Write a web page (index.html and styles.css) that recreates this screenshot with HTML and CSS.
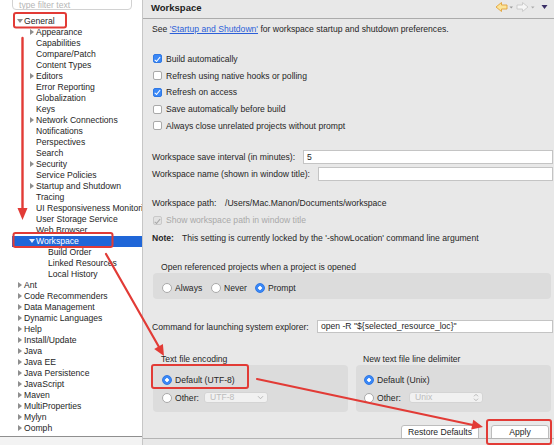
FILE: index.html
```html
<!DOCTYPE html>
<html>
<head>
<meta charset="utf-8">
<link rel="stylesheet" href="styles.css">
</head>
<body>
<div class="app">
  <aside class="side">
    <div class="filter">type filter text</div>
    <ul class="tree">
      <li class="r l0 o"><span class="tw"></span>General</li>
      <li class="r l1 c"><span class="tw"></span>Appearance</li>
      <li class="r l1"><span class="tw"></span>Capabilities</li>
      <li class="r l1"><span class="tw"></span>Compare/Patch</li>
      <li class="r l1"><span class="tw"></span>Content Types</li>
      <li class="r l1 c"><span class="tw"></span>Editors</li>
      <li class="r l1"><span class="tw"></span>Error Reporting</li>
      <li class="r l1"><span class="tw"></span>Globalization</li>
      <li class="r l1"><span class="tw"></span>Keys</li>
      <li class="r l1 c"><span class="tw"></span>Network Connections</li>
      <li class="r l1"><span class="tw"></span>Notifications</li>
      <li class="r l1"><span class="tw"></span>Perspectives</li>
      <li class="r l1"><span class="tw"></span>Search</li>
      <li class="r l1 c"><span class="tw"></span>Security</li>
      <li class="r l1"><span class="tw"></span>Service Policies</li>
      <li class="r l1 c"><span class="tw"></span>Startup and Shutdown</li>
      <li class="r l1"><span class="tw"></span>Tracing</li>
      <li class="r l1"><span class="tw"></span>UI Responsiveness Monitoring</li>
      <li class="r l1"><span class="tw"></span>User Storage Service</li>
      <li class="r l1"><span class="tw"></span>Web Browser</li>
      <li class="r l1 o sel"><span class="tw"></span>Workspace</li>
      <li class="r l2"><span class="tw"></span>Build Order</li>
      <li class="r l2"><span class="tw"></span>Linked Resources</li>
      <li class="r l2"><span class="tw"></span>Local History</li>
      <li class="r l0 c"><span class="tw"></span>Ant</li>
      <li class="r l0 c"><span class="tw"></span>Code Recommenders</li>
      <li class="r l0 c"><span class="tw"></span>Data Management</li>
      <li class="r l0 c"><span class="tw"></span>Dynamic Languages</li>
      <li class="r l0 c"><span class="tw"></span>Help</li>
      <li class="r l0 c"><span class="tw"></span>Install/Update</li>
      <li class="r l0 c"><span class="tw"></span>Java</li>
      <li class="r l0 c"><span class="tw"></span>Java EE</li>
      <li class="r l0 c"><span class="tw"></span>Java Persistence</li>
      <li class="r l0 c"><span class="tw"></span>JavaScript</li>
      <li class="r l0 c"><span class="tw"></span>Maven</li>
      <li class="r l0 c"><span class="tw"></span>MultiProperties</li>
      <li class="r l0 c"><span class="tw"></span>Mylyn</li>
      <li class="r l0 c"><span class="tw"></span>Oomph</li>
      <li class="r l0 c"><span class="tw"></span>PHP</li>
    </ul>
    <div class="side-foot"></div>
  </aside>

  <main class="main">
    <header class="hdr">
      <span class="title">Workspace</span>
      <svg class="nav" width="54" height="12" viewBox="0 0 54 12">
        <path d="M2 6 L7.5 1.5 V4 H13 V8 H7.5 V10.5 Z" fill="#fce59a" stroke="#e2a23a" stroke-width="0.9" stroke-linejoin="round"/>
        <path d="M15.5 5.5 h3.5 l-1.75 2z" fill="#9a9a9a"/>
        <path d="M34 6 L28.5 1.5 V4 H23 V8 H28.5 V10.5 Z" fill="#f6f6f6" stroke="#c8c8c8" stroke-width="0.9" stroke-linejoin="round"/>
        <path d="M37 5.5 h3.5 l-1.75 2z" fill="#ababab"/>
        <path d="M47.5 4 h6 l-3 4z" fill="#3a2e66"/>
      </svg>
    </header>

    <section class="body">
      <div class="ln desc">See <span class="link">'Startup and Shutdown'</span> for workspace startup and shutdown preferences.</div>

      <div class="checks">
        <div class="chk"><span class="cb on"></span>Build automatically</div>
        <div class="chk"><span class="cb"></span>Refresh using native hooks or polling</div>
        <div class="chk"><span class="cb on"></span>Refresh on access</div>
        <div class="chk"><span class="cb"></span>Save automatically before build</div>
        <div class="chk"><span class="cb"></span>Always close unrelated projects without prompt</div>
      </div>

      <div class="field f1"><span class="lbl">Workspace save interval (in minutes):</span><span class="inp w250">5</span></div>
      <div class="field f2"><span class="lbl">Workspace name (shown in window title):</span><span class="inp w235"></span></div>

      <div class="ln pathrow"><span class="plbl">Workspace path:</span>/Users/Mac.Manon/Documents/workspace</div>
      <div class="ln dischk"><span class="cb on dis"></span>Show workspace path in window title</div>
      <div class="ln note"><span class="nlbl">Note:</span>This setting is currently locked by the '-showLocation' command line argument</div>

      <div class="ln grp-label openlbl">Open referenced projects when a project is opened</div>
      <div class="grp g1">
        <span class="rad w49"><span class="rb"></span>Always</span>
        <span class="rad w44"><span class="rb"></span>Never</span>
        <span class="rad"><span class="rb on"></span>Prompt</span>
      </div>

      <div class="field f3"><span class="lbl">Command for launching system explorer:</span><span class="inp w236">open -R "${selected_resource_loc}"</span></div>

      <div class="two">
        <div class="col">
          <div class="ln grp-label">Text file encoding</div>
          <div class="grp g2 enc">
            <span class="rad"><span class="rb on"></span>Default (UTF-8)</span>
            <span class="rad other"><span class="rb"></span><span class="olbl o29">Other:</span>
              <span class="dd d64">UTF-8<svg class="chev" width="7" height="5" viewBox="0 0 7 5"><path d="M1 1.2 L3.5 3.8 L6 1.2" fill="none" stroke="#b8b8b8" stroke-width="1"/></svg></span>
            </span>
          </div>
        </div>
        <div class="col">
          <div class="ln grp-label dl">New text file line delimiter</div>
          <div class="grp g2 delim">
            <span class="rad"><span class="rb on"></span>Default (Unix)</span>
            <span class="rad other"><span class="rb"></span><span class="olbl o32">Other:</span>
              <span class="dd d74">Unix<svg class="chev" width="6" height="9" viewBox="0 0 6 9"><path d="M1 3.3 L3 1.3 L5 3.3 M1 5.7 L3 7.7 L5 5.7" fill="none" stroke="#b8b8b8" stroke-width="1"/></svg></span>
            </span>
          </div>
        </div>
      </div>

      <div class="btns">
        <span class="btn b1">Restore Defaults</span>
        <span class="btn b2">Apply</span>
      </div>
    </section>
    <footer class="foot"></footer>
  </main>
</div>

<svg class="marks" width="554" height="445" viewBox="0 0 554 445">
  <g fill="none" stroke="#e23b36" stroke-width="2" stroke-linecap="round" stroke-linejoin="round">
    <rect x="14" y="13" width="52" height="14.5" rx="2"/>
    <rect x="13.5" y="233" width="99" height="14" rx="2"/>
    <rect x="152" y="365" width="96" height="23" rx="2"/>
    <rect x="487" y="420" width="64" height="24" rx="2"/>
    <line x1="22.5" y1="38" x2="22.5" y2="210" stroke-width="2.4"/>
    <line x1="106" y1="254" x2="159" y2="347" stroke-width="2.2"/>
    <line x1="257" y1="379" x2="473" y2="425" stroke-width="2.2"/>
  </g>
  <g fill="#e23b36">
    <polygon points="17.5,208 27.5,208 22.5,220"/>
    <polygon points="154.2,348.9 162.9,344 164,356"/>
    <polygon points="471.2,429.6 473.3,419.8 483,427"/>
  </g>
</svg>
</body>
</html>
```

FILE: styles.css
```css
* { box-sizing: border-box; margin: 0; padding: 0; }
html, body { width: 554px; height: 445px; overflow: hidden; }
body {
  font-family: "Liberation Sans", Arial, sans-serif;
  font-size: 8.6px;
  color: #262626;
  background: #e8e8e8;
  position: relative;
}
.app { display: flex; height: 445px; }

/* ---------- left tree ---------- */
.side {
  width: 143px; flex: none; background: #fff;
  border-right: 1px solid #c6c6c6;
  display: flex; flex-direction: column; overflow: hidden;
}
.filter {
  margin: -5px 10px 0 12px; height: 15px; flex: none;
  border: 1px solid #d2d2d2; border-radius: 4px;
  color: #b6b6b6; padding: 3px 0 0 6px; line-height: 12px;
  white-space: nowrap; overflow: hidden;
}
.tree { list-style: none; margin-top: 5.5px; padding-left: 12px; flex: 1; min-height: 0; overflow: hidden; }
.r { height: 11px; line-height: 11px; white-space: nowrap; overflow: hidden; display: flex; align-items: center; color: #1e1e1e; }
.l0 { padding-left: 5px; }
.l1 { padding-left: 17px; }
.l2 { padding-left: 29px; }
.tw { width: 7px; height: 11px; flex: none; position: relative; }
.c .tw::before {
  content: ""; position: absolute; left: 1px; top: 2.5px;
  border-left: 4.5px solid #8e8e8e; border-top: 3px solid transparent; border-bottom: 3px solid transparent;
}
.o .tw::before {
  content: ""; position: absolute; left: 0; top: 3.5px;
  border-top: 4.5px solid #8e8e8e; border-left: 3px solid transparent; border-right: 3px solid transparent;
}
.sel { background: #1f66d8; color: #fff; }
.sel .tw::before { border-top-color: #e8eefc; }
.side-foot { height: 9px; flex: none; border-top: 1px solid #8f8f8f; background: #f3f3f3; }

/* ---------- right page ---------- */
.main { flex: 1; display: flex; flex-direction: column; min-width: 0; }
.hdr {
  height: 19px; flex: none; display: flex; align-items: center;
  padding: 0 6px 4px 8px; border-bottom: 1px solid #ababab;
}
.title { font-weight: bold; font-size: 9.5px; color: #1c1c1c; }
.nav { margin-left: auto; display: block; }

.body { flex: 1; min-height: 0; overflow: hidden; padding: 0 1px 0 9px; display: flex; flex-direction: column; }
.body > * { flex: none; }
.foot { height: 7px; flex: none; border-top: 1px solid #b4b4b4; }

.ln { height: 11px; line-height: 11px; white-space: nowrap; display: flex; align-items: center; }
.desc { margin-top: 5px; display: block; }
.link { color: #2c5fd8; text-decoration: underline; }

.checks { margin-top: 15.6px; }
.chk { height: 16.75px; display: flex; align-items: center; white-space: nowrap; }
.cb {
  width: 9px; height: 9px; border: 1px solid #a9a9a9; border-radius: 2px; background: #fff;
  margin: 0 4px 0 1px; flex: none; position: relative;
}
.cb.on { background: #3b88f6; border-color: #2f78e4; }
.cb.on::after {
  content: ""; position: absolute; left: 2.3px; top: 0.3px; width: 2.4px; height: 4.6px;
  border-right: 1.4px solid #fff; border-bottom: 1.4px solid #fff; transform: rotate(40deg);
}
.cb.dis { background: #e2e2e2; border-color: #c9c9c9; }
.cb.dis::after { border-color: #a6a6a6; }

.field { display: flex; align-items: center; height: 14px; white-space: nowrap; }
.field .lbl { flex: 1; }
.f1 { margin-top: 15.65px; }
.f2 { margin-top: 3px; }
.f3 { margin-top: 21px; height: 13px; }
.inp {
  height: 14px; background: #fff; border: 1px solid #c4c4c4; flex: none;
  padding-left: 3px; line-height: 12px; color: #1e1e1e; overflow: hidden; white-space: nowrap;
}
.f3 .inp { height: 13px; line-height: 11px; }
.w250 { width: 250px; }
.w235 { width: 235px; }
.w236 { width: 236px; }

.pathrow { margin-top: 17.5px; }
.plbl { width: 73px; flex: none; }
.dischk { margin-top: 6px; color: #a9a9a9; }
.note { margin-top: 6.5px; }
.nlbl { width: 30px; flex: none; font-weight: bold; }

.grp-label { padding-left: 9px; }
.openlbl { margin-top: 18.5px; }
.grp { background: #dcdcdc; border-radius: 4px; }
.g1 { height: 26px; padding: 9px 0 0 9px; display: flex; margin: 0 2px 0 1px; }
.rad { display: flex; align-items: center; height: 11px; white-space: nowrap; flex: none; }
.w49 { width: 49px; }
.w44 { width: 44px; }
.rb {
  width: 10px; height: 10px; border-radius: 50%; border: 1px solid #a9a9a9; background: #fff;
  margin-right: 3px; flex: none;
}
.rb.on { border-color: #2f78e4; background: radial-gradient(circle, #fff 0 1.5px, #3b88f6 2.1px); }

.two { display: grid; grid-template-columns: 195px 195px; column-gap: 8px; margin: 21px 2px 0 1px; }
.two .grp-label { padding-left: 8px; }
.two .grp-label.dl { padding-left: 7px; }
.g2 { height: 47px; padding-top: 9.5px; display: flex; flex-direction: column; align-items: flex-start; }
.enc { padding-left: 9px; }
.delim { padding-left: 8px; }
.rad.other { height: 12px; margin-top: 6px; }
.olbl { flex: none; }
.o29 { width: 29px; }
.o32 { width: 32px; }
.dd {
  height: 11px; border: 1px solid #d4d4d4; border-radius: 3px; background: #f1f1f1; color: #bcbcbc;
  padding-left: 5px; line-height: 9px; display: flex; align-items: center; justify-content: space-between;
  padding-right: 3px;
}
.d64 { width: 64px; }
.d74 { width: 74px; }
.chev { display: block; flex: none; }

.btns {
  margin-top: 12.5px; height: 13.5px; overflow: hidden; display: flex; justify-content: flex-end;
  gap: 12px; padding-right: 4px;
}
.btn {
  height: 18px; background: #fff; border: 1px solid #bdbdbd; border-radius: 3px;
  text-align: center; line-height: 12px; color: #1e1e1e; flex: none;
}
.b1 { width: 78px; }
.b2 { width: 58px; }

/* annotations overlay */
.marks { position: absolute; left: 0; top: 0; pointer-events: none; }
```
